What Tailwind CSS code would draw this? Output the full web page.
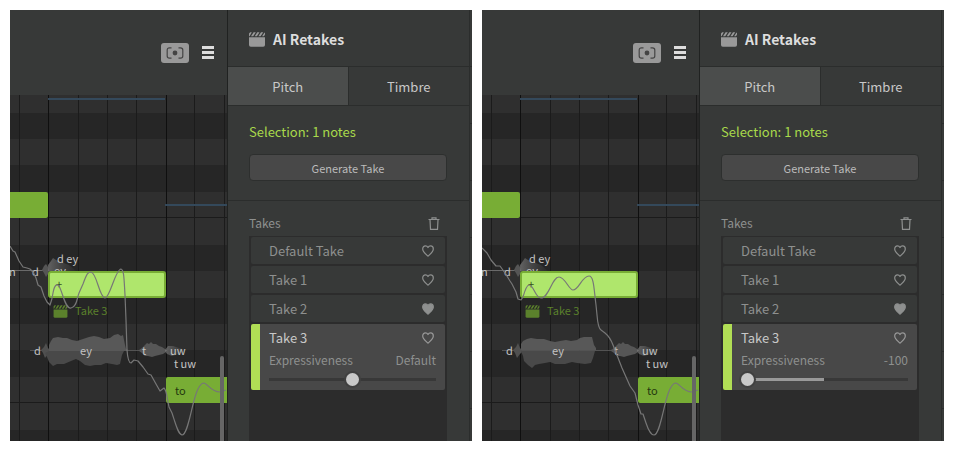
<!DOCTYPE html>
<html lang="en">
<head>
<meta charset="utf-8">
<meta name="viewport" content="width=device-width, initial-scale=1">
<title>AI Retakes</title>
<script src="https://cdn.jsdelivr.net/npm/@tailwindcss/browser@4"></script>
</head>
<body class="bg-white font-['Noto_Sans_CJK_SC','Noto_Sans',sans-serif] text-[13px] leading-5 text-[#c8c8c8]">

<!-- Shared icons and piano-roll layers -->
<svg class="absolute h-0 w-0" aria-hidden="true">
  <symbol id="clap" viewBox="0 0 16 15">
    <path d="M0 5.2h16v7.8a1.8 1.8 0 0 1-1.8 1.8H1.8A1.8 1.8 0 0 1 0 13z" fill="currentColor"/>
    <path d="M0 4.2V1.6L1.2.2h1.6L.6 4.2zM2 4.2 4.6.2h2.2L4.2 4.2zM5.7 4.2 8.3.2h2.2L7.9 4.2zM9.4 4.2 12 .2h2.2L11.6 4.2zM13.1 4.2 15.5.4l.5.5v1.7l-1 1.6z" fill="currentColor"/>
  </symbol>
  <symbol id="heart" viewBox="0 0 12 12">
    <path d="M6 11.2C4 9.200.7 6.700.7 3.900.7 2.100 1.900.9 3.400.9 4.600.9 5.500 1.500 6 2.500 6.500 1.500 7.400.9 8.600.9c1.500 0 2.700 1.200 2.700 3 0 2.800-3.300 5.300-5.300 7.300z" stroke="currentColor" stroke-width="1.2" stroke-linejoin="round"/>
  </symbol>
  <symbol id="trash" viewBox="0 0 12 13">
    <path d="M.5 2.500h11M4 2.300V.8h4v1.500M2 2.800l.5 9.500h7l.5-9.500" fill="none" stroke="currentColor" stroke-width="1.2"/>
  </symbol>
  <symbol id="focus" viewBox="0 0 18 12">
    <path d="M5.500.8H3.500Q1.200.8 1.200 3v6q0 2.200 2.300 2.200h2M12.500.8h2q2.300 0 2.300 2.200v6q0 2.200-2.300 2.200h-2" fill="none" stroke="currentColor" stroke-width="1.2"/>
    <circle cx="9" cy="6" r="2.400" fill="currentColor"/>
  </symbol>
  <linearGradient id="fade"><stop offset="0" stop-color="#777" stop-opacity=".75"/><stop offset="1" stop-color="#555" stop-opacity=".1"/></linearGradient>
  <g id="grid">
    <path fill="#2f2f2f" d="M10 95h2000v346H10z"/>
    <path fill="#262626" d="M10 113h2000v26H10zM10 165h2000v27H10zM10 245h2000v26H10zM10 298h2000v26H10zM10 350h2000v27H10zM10 430h2000v11H10z"/>
    <path fill="#1b1b1b" d="M10 217h2000v1H10zM10 402h2000v1H10zM19 95h1v346h-1zM78 95h1v346h-1zM107 95h1v346h-1zM136 95h1v346h-1zM194 95h1v346h-1zM224 95h1v346h-1z"/>
    <path fill="#0f0f0f" d="M48 95h1v346h-1zM166 95h1v346h-1z"/>
    <path fill="#34495b" d="M48 98h117v2H48zM165 204h63v2h-63z"/>
  </g>
  <g id="notes">
    <path fill="#78ad35" d="M10 192h36q2 0 2 2v22q0 2-2 2H10z"/>
    <rect x="49" y="272" width="116" height="25" rx="2" fill="#afe66c" stroke="#78ad35" stroke-width="2"/>
    <path fill="#78ad35" d="M228 377h-60q-2 0-2 2v22q0 2 2 2h60z"/>
  </g>
  <g id="smallwaves">
    <path fill="#6a6a6a" d="M10 270h34v1H10z"/>
    <path fill="#555" d="M42 270l2-4 2-2 2 3 1 4-1 3-2 3-2-4z"/>
    <path fill="url(#fade)" d="M48 271v-6l3-4 2-3 3 2 13 5 7 6z"/>
    <path fill="#666" d="M30 350h137v1H30z" opacity=".7"/>
    <path fill="#505050" d="M41 350l3-3 2-4 2 5 2 2v2l-2 2-3 4-2-5z"/>
    <path fill="#565656" d="M139 350l3-2 3-3 2-2 2 1 2-2 2 2 3 0 3 2 3 1 3 2 1 1v2l-3 2-4 1-4 1-3 1-4-1-3 0-3-3-3-2z"/>
    <path fill="url(#fade)" d="M165 350l3-4 5 0 6 2 8 2-8 4-7 2-5-2-2-3z"/>
  </g>
</svg>

<main class="grid h-screen min-h-[420px] grid-cols-2 gap-[10px] p-[10px]">

  <section class="flex min-w-0 overflow-hidden bg-[#373938]" aria-label="Default expressiveness">
    <div class="flex min-w-0 flex-1 flex-col">
      <header class="flex h-[85px] shrink-0 items-center justify-end gap-[13px] pr-[13px]">
        <button class="flex h-5 w-7 items-center justify-center rounded-[3px] bg-[#999] text-[#444]" aria-label="Focus"><svg class="h-3 w-[18px]"><use href="#focus"/></svg></button>
        <button class="flex w-3 flex-col gap-[2px]" aria-label="Menu"><i class="h-[3px] w-full bg-[#ddd]"></i><i class="h-[3px] w-full bg-[#ddd]"></i><i class="h-[3px] w-full bg-[#ddd]"></i></button>
      </header>
      <svg class="min-h-0 w-full flex-1" viewBox="10 95 217 346" preserveAspectRatio="xMinYMin slice" role="img" aria-label="Piano roll" font-size="11" fill="#c4c4c4">
        <use href="#grid"/>
        <use href="#smallwaves"/>
        <path fill="#585858" d="M49 350v-5l2-4 2-3 5-1 5 1 4 0 5 2 5 1 6-2 6-2 5-1 5 1 5 2 6-1 4-3 4-1 3 2 2-1 2 10 1 4 2 1v1H49z"/>
        <path fill="#494949" d="M49 351h75l-2 4-2 9-3 1-5-1-6-1-5 2-6 0-5 1-5-1-5-4-4-2-5 2-7 3-7 0-4 2-4-4-2-5-2-4z"/>
        <text x="54" y="275">ey</text>
        <use href="#notes"/>
        <text x="9" y="276">n</text>
        <text x="32" y="276">d</text>
        <text x="57" y="263">d ey</text>
        <text x="56" y="289" fill="#335018">+</text>
        <text x="34" y="355">d</text>
        <text x="80" y="355">ey</text>
        <text x="142" y="355">t</text>
        <text x="170" y="355">uw</text>
        <text x="174" y="368">t uw</text>
        <text x="175" y="395" fill="#24380f">to</text>
        <svg x="53" y="305" width="15" height="13" color="#5b812c"><use href="#clap"/></svg>
        <text x="75" y="315" fill="#5b812c">Take 3</text>
        <path fill="none" stroke="#777" stroke-width="1.2" stroke-linejoin="round" d="M10 246L13 251 15 252 19 261 23 267 27 268 30 269 33 272 36 278 38 285 41 287 44 296 47 302 50 305Q52 300 53 293 55 282 59 286C63 293 65 309 71 308S77 298 79 293L83 284C87 273 88 272 91 272 97 273 99 297 105 298 110 298 115 270 121 269 124 270 124 278 125 295L126 320 127 350Q128 363 131 363L134 360 138 361 143 367 148 374 151 375 156 384 160 391 164 388Q166 390 167 397L169 407 172 413C176 425 178 434 182 435 190 435 193 383 204 383 208 384 211 392 220 392L226 390"/>
        <path fill="#666" d="M220 441v-83q0-2 2-2t2 2v83z"/>
      </svg>
    </div>

    <aside class="flex w-[245px] shrink-0 border-l border-[#202221]">
      <div class="flex min-w-0 flex-1 flex-col">
        <h2 class="flex h-[57px] shrink-0 items-center gap-2 border-b border-[#2b2d2c] pt-[2px] pl-[21px] text-sm font-bold text-[#ddd]"><svg class="h-[15px] w-4 text-[#999]" aria-hidden="true"><use href="#clap"/></svg>AI Retakes</h2>
        <div class="grid h-[39px] shrink-0 grid-cols-2 border-b border-[#2b2d2c]" role="tablist">
          <button class="border-r border-[#2b2d2c] bg-[#4b4d4c] pt-[2px]" role="tab" aria-selected="true">Pitch</button>
          <button class="pt-[2px]" role="tab" aria-selected="false">Timbre</button>
        </div>
        <div class="flex shrink-0 flex-col gap-3 border-b border-[#2b2d2c] pt-4 pr-[22px] pb-[19px] pl-[21px]">
          <p class="text-[#a9d94b]">Selection: 1 notes</p>
          <button class="h-[27px] rounded border border-[#2d2f2e] bg-[#484848] text-[11px] text-[#bbb]">Generate Take</button>
        </div>
        <div class="flex min-h-0 flex-1 flex-col pt-3 pr-[22px] pl-[21px]">
          <div class="flex shrink-0 items-center justify-between pr-[7px] text-xs leading-5 text-[#8e908f]"><h3>Takes</h3><button aria-label="Delete take"><svg class="h-[13px] w-3"><use href="#trash"/></svg></button></div>
          <ul class="mt-[3px] flex flex-1 flex-col gap-[2px] overflow-hidden bg-[#2c2c2c] px-[2px] pt-[1px] text-[#8e908f]">
            <li class="flex h-[27px] shrink-0 items-center justify-between rounded-[2px] bg-[#373938] pr-[11px] pl-[18px]">Default Take<button aria-label="Favourite Default Take"><svg class="h-3 w-3" fill="none"><use href="#heart"/></svg></button></li>
            <li class="flex h-[27px] shrink-0 items-center justify-between rounded-[2px] bg-[#373938] pr-[11px] pl-[18px]">Take 1<button aria-label="Favourite Take 1"><svg class="h-3 w-3" fill="none"><use href="#heart"/></svg></button></li>
            <li class="flex h-[27px] shrink-0 items-center justify-between rounded-[2px] bg-[#373938] pr-[11px] pl-[18px]">Take 2<button aria-label="Unfavourite Take 2"><svg class="h-3 w-3" fill="currentColor"><use href="#heart"/></svg></button></li>
            <li class="h-[66px] shrink-0 rounded-[2px] border-l-[9px] border-[#b1de55] bg-[#484848] pr-[9px] pl-[9px]">
              <div class="flex h-[27px] items-center justify-between pr-[2px] text-[#c8c8c8]">Take 3<button class="text-[#999]" aria-label="Favourite Take 3"><svg class="h-3 w-3" fill="none"><use href="#heart"/></svg></button></div>
              <div class="flex h-[18px] items-center justify-between text-xs"><label for="exprA">Expressiveness</label><output for="exprA">Default</output></div>
              <input id="exprA" type="range" min="-100" max="100" value="0" class="mt-[3px] block h-[14px] w-full appearance-none bg-[linear-gradient(#383838,#383838)] bg-[length:100%_3px] bg-center bg-no-repeat [&::-webkit-slider-thumb]:h-[13px] [&::-webkit-slider-thumb]:w-[13px] [&::-webkit-slider-thumb]:appearance-none [&::-webkit-slider-thumb]:rounded-full [&::-webkit-slider-thumb]:bg-[#c8c8c8] [&::-webkit-slider-thumb]:shadow-[0_0_0_2px_#404040]">
            </li>
          </ul>
        </div>
      </div>
      <div class="w-[3px] border-l border-[#2b2d2c] bg-[repeating-linear-gradient(#373938_0_56px,#2b2d2c_56px_57px)]"></div>
    </aside>
  </section>

  <section class="flex min-w-0 overflow-hidden bg-[#373938]" aria-label="Low expressiveness">
    <div class="flex min-w-0 flex-1 flex-col">
      <header class="flex h-[85px] shrink-0 items-center justify-end gap-[13px] pr-[13px]">
        <button class="flex h-5 w-7 items-center justify-center rounded-[3px] bg-[#999] text-[#444]" aria-label="Focus"><svg class="h-3 w-[18px]"><use href="#focus"/></svg></button>
        <button class="flex w-3 flex-col gap-[2px]" aria-label="Menu"><i class="h-[3px] w-full bg-[#ddd]"></i><i class="h-[3px] w-full bg-[#ddd]"></i><i class="h-[3px] w-full bg-[#ddd]"></i></button>
      </header>
      <svg class="min-h-0 w-full flex-1" viewBox="10 95 217 346" preserveAspectRatio="xMinYMin slice" role="img" aria-label="Piano roll" font-size="11" fill="#c4c4c4">
        <use href="#grid"/>
        <use href="#smallwaves"/>
        <path fill="#585858" d="M49 350v-6l2-3 4-2 4-1 6 1 7 0 6 2 5 1 5-1 6-1 5 1 6-1 3-2 4-1 8 0 2 8 2 3 0 2H49z"/>
        <path fill="#494949" d="M49 351h74l-2 7-2 5-6 1-8-1-5-1-7 2-5 0-5 0-5-2-5 1-6 1-4 1-3 3-4-3-4-4-1-5z"/>
        <text x="54" y="275">ey</text>
        <use href="#notes"/>
        <text x="9" y="276">n</text>
        <text x="32" y="276">d</text>
        <text x="57" y="263">d ey</text>
        <text x="56" y="289" fill="#335018">+</text>
        <text x="34" y="355">d</text>
        <text x="80" y="355">ey</text>
        <text x="142" y="355">t</text>
        <text x="170" y="355">uw</text>
        <text x="174" y="368">t uw</text>
        <text x="175" y="395" fill="#24380f">to</text>
        <svg x="53" y="305" width="15" height="13" color="#5b812c"><use href="#clap"/></svg>
        <text x="75" y="315" fill="#5b812c">Take 3</text>
        <path fill="none" stroke="#777" stroke-width="1.2" stroke-linejoin="round" d="M10 248L15 253 19 260 24 266 28 266 33 273 38 281 40 284 44 292 46 299 49 300 51 297C53 290 55 285 57 285 62 285 63 298 69 298 77 298 80 277 87 277 93 277 97 290 101 290 107 290 110 276 117 276 122 276 122 290 124 305L125 315Q126 328 129 330L133 333Q138 337 141 345L150 368 158 386 163 393 166 405 169 414 171 414 174 423Q178 435 182 435C190 435 193 383 204 383 208 384 211 392 220 392L226 390"/>
        <path fill="#666" d="M220 441v-83q0-2 2-2t2 2v83z"/>
      </svg>
    </div>

    <aside class="flex w-[245px] shrink-0 border-l border-[#202221]">
      <div class="flex min-w-0 flex-1 flex-col">
        <h2 class="flex h-[57px] shrink-0 items-center gap-2 border-b border-[#2b2d2c] pt-[2px] pl-[21px] text-sm font-bold text-[#ddd]"><svg class="h-[15px] w-4 text-[#999]" aria-hidden="true"><use href="#clap"/></svg>AI Retakes</h2>
        <div class="grid h-[39px] shrink-0 grid-cols-2 border-b border-[#2b2d2c]" role="tablist">
          <button class="border-r border-[#2b2d2c] bg-[#4b4d4c] pt-[2px]" role="tab" aria-selected="true">Pitch</button>
          <button class="pt-[2px]" role="tab" aria-selected="false">Timbre</button>
        </div>
        <div class="flex shrink-0 flex-col gap-3 border-b border-[#2b2d2c] pt-4 pr-[22px] pb-[19px] pl-[21px]">
          <p class="text-[#a9d94b]">Selection: 1 notes</p>
          <button class="h-[27px] rounded border border-[#2d2f2e] bg-[#484848] text-[11px] text-[#bbb]">Generate Take</button>
        </div>
        <div class="flex min-h-0 flex-1 flex-col pt-3 pr-[22px] pl-[21px]">
          <div class="flex shrink-0 items-center justify-between pr-[7px] text-xs leading-5 text-[#8e908f]"><h3>Takes</h3><button aria-label="Delete take"><svg class="h-[13px] w-3"><use href="#trash"/></svg></button></div>
          <ul class="mt-[3px] flex flex-1 flex-col gap-[2px] overflow-hidden bg-[#2c2c2c] px-[2px] pt-[1px] text-[#8e908f]">
            <li class="flex h-[27px] shrink-0 items-center justify-between rounded-[2px] bg-[#373938] pr-[11px] pl-[18px]">Default Take<button aria-label="Favourite Default Take"><svg class="h-3 w-3" fill="none"><use href="#heart"/></svg></button></li>
            <li class="flex h-[27px] shrink-0 items-center justify-between rounded-[2px] bg-[#373938] pr-[11px] pl-[18px]">Take 1<button aria-label="Favourite Take 1"><svg class="h-3 w-3" fill="none"><use href="#heart"/></svg></button></li>
            <li class="flex h-[27px] shrink-0 items-center justify-between rounded-[2px] bg-[#373938] pr-[11px] pl-[18px]">Take 2<button aria-label="Unfavourite Take 2"><svg class="h-3 w-3" fill="currentColor"><use href="#heart"/></svg></button></li>
            <li class="h-[66px] shrink-0 rounded-[2px] border-l-[9px] border-[#b1de55] bg-[#484848] pr-[9px] pl-[9px]">
              <div class="flex h-[27px] items-center justify-between pr-[2px] text-[#c8c8c8]">Take 3<button class="text-[#999]" aria-label="Favourite Take 3"><svg class="h-3 w-3" fill="none"><use href="#heart"/></svg></button></div>
              <div class="flex h-[18px] items-center justify-between text-xs"><label for="exprB">Expressiveness</label><output for="exprB">-100</output></div>
              <input id="exprB" type="range" min="-100" max="100" value="-100" class="mt-[3px] block h-[14px] w-full appearance-none bg-[linear-gradient(90deg,#999_50%,#383838_50%)] bg-[length:100%_3px] bg-center bg-no-repeat [&::-webkit-slider-thumb]:h-[13px] [&::-webkit-slider-thumb]:w-[13px] [&::-webkit-slider-thumb]:appearance-none [&::-webkit-slider-thumb]:rounded-full [&::-webkit-slider-thumb]:bg-[#c8c8c8] [&::-webkit-slider-thumb]:shadow-[0_0_0_2px_#404040]">
            </li>
          </ul>
        </div>
      </div>
      <div class="w-[3px] border-l border-[#2b2d2c] bg-[repeating-linear-gradient(#373938_0_56px,#2b2d2c_56px_57px)]"></div>
    </aside>
  </section>
</main>
</body>
</html>
